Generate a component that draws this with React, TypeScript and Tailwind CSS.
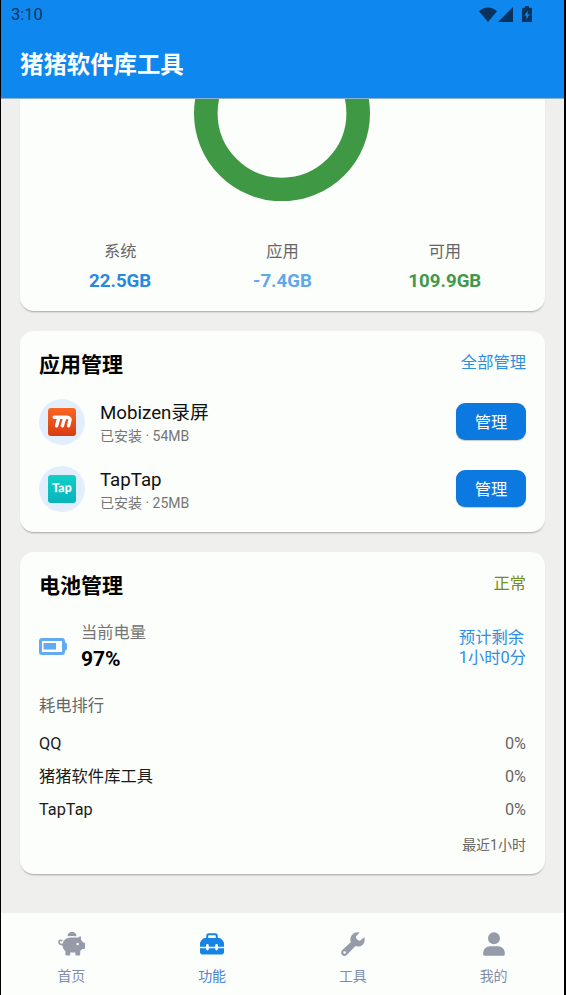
const storage = [
  { label: "系统", value: "22.5GB", color: "text-[#2589e0]" },
  { label: "应用", value: "-7.4GB", color: "text-[#5fa8ea]" },
  { label: "可用", value: "109.9GB", color: "text-[#40994a]" },
];

const apps = [
  { name: "Mobizen录屏", info: "已安装 · 54MB", icon: <MobizenIcon /> },
  { name: "TapTap", info: "已安装 · 25MB", icon: <TapTapIcon /> },
];

const usage = [
  { name: "QQ", percent: 0 },
  { name: "猪猪软件库工具", percent: 0 },
  { name: "TapTap", percent: 0 },
];

export default function App() {
  return (
    <div className="h-[995px] w-[566px] bg-black pl-px pr-[2px] font-[Roboto,'Noto_Sans_CJK_SC',sans-serif] whitespace-nowrap">
      <div className="flex h-full flex-col overflow-hidden bg-[#eff0ee]">
        <Header />

        <main className="flex-1 overflow-hidden px-[19px]">
          <div className="-mt-[93px] flex flex-col gap-5">
            <StorageCard />
            <AppsCard />
            <BatteryCard />
          </div>
        </main>

        <BottomNav />
      </div>
    </div>
  );
}

function Header() {
  return (
    <header className="h-[99px] shrink-0 border-b border-[#8fb3cf] bg-[#0e88ef]">
      <div className="flex h-7 items-center justify-between pr-8 pl-[10px]">
        <span className="pt-[3px] text-[16.5px] text-[#0a3563]">3:10</span>
        <div className="flex items-center text-[#07345f]">
          <svg width="18" height="15" viewBox="0 0 18 15" fill="currentColor">
            <path d="M9 15 0 4.2C2.4 1.8 5.5.4 9 .4s6.6 1.400 9 3.800z" />
          </svg>
          <svg className="ml-[1px]" width="15" height="15" viewBox="0 0 15 15" fill="currentColor">
            <path d="M15 0v15H0z" />
          </svg>
          <svg className="ml-[9px]" width="10" height="16" viewBox="0 0 10 16">
            <path d="M3 0h4v1.700h1.800c.7 0 1.200.5 1.200 1.200V16H0V2.900c0-.7.5-1.200 1.200-1.200H3z" fill="currentColor" />
            <path d="M5.600 4.500 2.400 9.800h2V13.500l3.200-5.300h-2z" fill="#0e88ef" />
          </svg>
        </div>
      </div>
      <h1 className="mt-5 pl-[19px] text-[23.4px] leading-[34px] font-bold text-white">猪猪软件库工具</h1>
    </header>
  );
}

function Card({ className, children }: { className: string; children: React.ReactNode }) {
  return (
    <section className={`rounded-[14px] bg-[#fcfefb] px-[19px] shadow-[0_2px_2px_-1px_rgba(0,0,0,0.32)] ${className}`}>
      {children}
    </section>
  );
}

function StorageCard() {
  return (
    <Card className="pt-[19px] pb-4">
      <svg className="mx-auto block" width="177" height="176" viewBox="0 0 177 176">
        <circle cx="88" cy="88.3" r="76.2" fill="none" stroke="#3f9843" strokeWidth="23.6" />
      </svg>
      <div className="mt-[39px] grid grid-cols-3 text-center">
        {storage.map((item) => (
          <div key={item.label}>
            <p className="text-[16.3px] leading-6 text-[#666]">{item.label}</p>
            <p className={`mt-[3px] text-[18.7px] leading-7 font-bold ${item.color}`}>{item.value}</p>
          </div>
        ))}
      </div>
    </Card>
  );
}

function AppsCard() {
  return (
    <Card className="pt-[19px] pb-5">
      <div className="flex items-start justify-between">
        <h2 className="text-[21px] leading-[30px] font-bold text-black">应用管理</h2>
        <span className="mt-px text-[16.3px] leading-6 text-[#2f8ee0]">全部管理</span>
      </div>
      <div className="mt-[18px] flex flex-col gap-5">
        {apps.map((app) => (
          <div key={app.name} className="flex h-[47px] items-center">
            <div className="flex size-[46px] items-center justify-center rounded-full bg-[#e2eefc]">{app.icon}</div>
            <div className="ml-[15px] flex-1 pt-[5px]">
              <p className="text-[18.7px] leading-6 text-[#111]">{app.name}</p>
              <p className="text-[14px] leading-[22px] text-[#757575]">{app.info}</p>
            </div>
            <button className="h-[37px] w-[70px] rounded-[9px] bg-[#0b79e0] pt-[3px] text-[16.3px] text-white shadow-[0_1px_1px_rgba(0,0,0,0.2)]">
              管理
            </button>
          </div>
        ))}
      </div>
    </Card>
  );
}

function BatteryCard() {
  return (
    <Card className="pt-[19px] pb-[19px]">
      <div className="flex items-start justify-between">
        <h2 className="text-[21px] leading-[30px] font-bold text-black">电池管理</h2>
        <span className="mt-px text-[16.3px] leading-6 text-[#768c14]">正常</span>
      </div>

      <div className="mt-[19px] flex items-center">
        <svg className="mb-[2px]" width="28" height="17" viewBox="0 0 28 17">
          <rect x="1.5" y="1.5" width="23" height="14" rx="1.5" fill="#fff" stroke="#64aaf0" strokeWidth="3" />
          <path d="M25.500 4c1.500.4 2.500 1.300 2.500 2.500v4c0 1.200-1 2.100-2.500 2.500z" fill="#64aaf0" />
          <rect x="4.500" y="5" width="12.500" height="6.500" fill="#64aaf0" />
        </svg>
        <div className="ml-[14px] flex-1 py-px">
          <p className="text-[16.3px] leading-6 text-[#757575]">当前电量</p>
          <p className="text-[21px] leading-7 font-bold text-black">97%</p>
        </div>
        <p className="pt-px text-[16.3px] leading-[19.6px] text-[#2f8ee0]">
          预计剩余
          <br />
          1小时0分
        </p>
      </div>

      <p className="mt-5 text-[16.3px] leading-6 text-[#666]">耗电排行</p>
      <div className="mt-[14px] flex flex-col gap-[9px] text-[16.3px] leading-6">
        {usage.map((item) => (
          <div key={item.name} className="flex justify-between">
            <span className="text-[#1a1a1a]">{item.name}</span>
            <span className="text-[#666]">{item.percent}%</span>
          </div>
        ))}
      </div>
      <p className="mt-[13px] text-right text-[14px] leading-5 text-[#666]">最近1小时</p>
    </Card>
  );
}

function BottomNav() {
  return (
    <nav className="grid h-[82px] shrink-0 grid-cols-4 bg-[#fcfefb]">
      <NavItem label="首页" icon={<PiggyIcon />} />
      <NavItem label="功能" icon={<ToolboxIcon />} active />
      <NavItem label="工具" icon={<WrenchIcon />} />
      <NavItem label="我的" icon={<UserIcon />} />
    </nav>
  );
}

function NavItem({ label, icon, active }: { label: string; icon: React.ReactNode; active?: boolean }) {
  return (
    <div className="flex flex-col items-center pt-[17px]">
      <div className={`flex h-7 items-center ${active ? "text-[#1683e6]" : "text-[#959ba9]"}`}>{icon}</div>
      <span className={`mt-2 text-[14px] leading-5 ${active ? "text-[#4a83d8]" : "text-[#7f8cae]"}`}>{label}</span>
    </div>
  );
}

function PiggyIcon() {
  return (
    <svg width="27" height="24" viewBox="0 0 27 24" fill="currentColor">
      {/* coin */}
      <path d="M9.500 4.300a4.500 4.500 0 0 1 9 0q-2-.4-4.500-.4t-4.500.4z" />
      {/* tail */}
      <path d="M6 12.500c-2.500.6-5-.2-5-2.500 0-1.400 1.200-2 2.700-1.500" fill="none" stroke="currentColor" strokeWidth="1.700" strokeLinecap="round" />
      <path
        fillRule="evenodd"
        d="M13 5.500h4.500c.8 0 1.500.1 2.200.3.900-.9 2.100-1.300 3.300-1.300v3.200c.9.800 1.600 1.700 2 2.800h1.200c.5 0 .8.300.8.800v5c0 .5-.3.800-.8.800h-1.900c-.6.800-1.300 1.400-2.100 1.900v3.500c0 .5-.4.900-.9.900h-3.100c-.5 0-.9-.4-.9-.9v-2h-5v2c0 .5-.4.900-.9.900H8.300c-.5 0-.9-.4-.9-.9V19C5.600 17.600 4.500 15.500 4.500 13.200c0-4.600 3.800-7.700 8.500-7.700zM19.600 13.200a1.200 1.200 0 1 0 0-2.400 1.200 1.200 0 0 0 0 2.400z"
      />
    </svg>
  );
}

function ToolboxIcon() {
  return (
    <svg width="24" height="22" viewBox="0 0 24 22" fill="currentColor">
      <path d="M7.200 6V3c0-1 .7-1.700 1.600-1.700h6.400c.9 0 1.600.7 1.600 1.700v3" fill="none" stroke="currentColor" strokeWidth="2" />
      <path d="M5 5h14c1 0 1.700.3 2.400 1l1.600 1.900c.7.8 1 1.600 1 2.600v3.200h-6v-1.300a1.400 1.400 0 0 0-2.800 0v1.300H8.800v-1.300a1.400 1.400 0 0 0-2.800 0v1.300H0v-3.200c0-1 .3-1.800 1-2.600L2.600 6C3.300 5.300 4 5 5 5z" />
      <path d="M0 15.200h6v.9a1.400 1.400 0 0 0 2.800 0v-.9h6.400v.9a1.400 1.400 0 0 0 2.800 0v-.9h6v4.100c0 1.200-1 2.200-2.200 2.200H2.200C1 21.500 0 20.500 0 19.300z" />
    </svg>
  );
}

function WrenchIcon() {
  return (
    <svg width="24" height="24" viewBox="0 0 24 24" fill="currentColor">
      <path
        fillRule="evenodd"
        d="M18.700.5 15.300 4.100c-.5.6-.5 1.200-.2 1.900.5 1.100 1.400 2 2.700 2.600.7.300 1.400.2 1.900-.3l3.500-3.300c1.100 3.400.2 6.400-1.900 8.100-2 1.600-4.500 1.900-6.800 1L6 22.700c-1.400 1.500-3.600 1.600-4.900.3-1.400-1.400-1.300-3.600.2-5l8.500-7.800C8.900 7.800 9.200 5.300 10.800 3.200 12.700.8 15.700-.3 18.700.5zM3.600 21.800a1.300 1.300 0 1 0 0-2.600 1.300 1.300 0 0 0 0 2.600z"
      />
    </svg>
  );
}

function UserIcon() {
  return (
    <svg width="22" height="24" viewBox="0 0 22 24" fill="currentColor">
      <circle cx="11" cy="6.200" r="6" />
      <path d="M7 14.200h8c3.800 0 6.800 3 6.800 6.800v1.600c0 .7-.5 1.200-1.200 1.200H1.400c-.7 0-1.200-.5-1.200-1.200V21c0-3.800 3-6.800 6.800-6.800z" />
    </svg>
  );
}

function MobizenIcon() {
  return (
    <div className="flex size-7 items-center justify-center rounded-[3px] bg-linear-to-b from-[#f86622] to-[#d93b12]">
      <svg width="20" height="13" viewBox="0 0 20 13" fill="none" stroke="#fff" strokeWidth="3.400" strokeLinecap="round" strokeLinejoin="round">
        <path d="M2.200 2.200h11.300c3.800 0 5 1.100 4.400 3.400l-1.300 5.200M6.900 2.600 4.600 10.800M12.700 2.600l-2.300 8.200" />
      </svg>
    </div>
  );
}

function TapTapIcon() {
  return (
    <div className="flex size-7 items-center justify-center rounded-[3px] bg-linear-to-b from-[#12d0c8] to-[#08b3bb]">
      <span className="-rotate-2 font-[Lato,sans-serif] text-[12.5px] leading-none font-black text-white">Tap</span>
    </div>
  );
}
